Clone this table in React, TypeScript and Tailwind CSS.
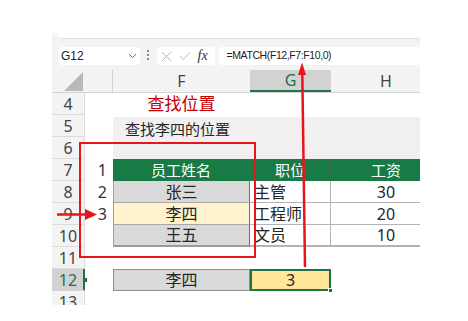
import React from "react";

const cjk = "font-['Noto_Sans','Noto_Sans_CJK_SC',sans-serif]";

function RowHead({ n, sel }: { n: number; sel?: boolean }) {
  return sel ? (
    <div className="relative w-[33px] shrink-0 flex items-center justify-center border-b border-r border-[#d4d4d4] bg-[#d2d2d2] text-[16px] text-[#217346]">
      {n}
      <div className="absolute right-[-1px] top-0 h-full w-[2px] bg-[#217346]" />
      <div className="absolute right-[-3px] top-[9px] h-[4px] w-[4px] bg-[#217346]" />
    </div>
  ) : (
    <div className="w-[33px] shrink-0 flex items-center justify-center border-b border-r border-[#dcdcdc] bg-[#f3f3f3] text-[16px] text-[#444]">
      {n}
    </div>
  );
}

export default function App() {
  return (
    <div className="w-[468px] h-[321px] bg-white pl-[52px] pt-[33px] overflow-hidden">
      <div className={`relative w-[368px] h-[272px] overflow-hidden bg-[#f3f3f3] ${cjk}`}>
        {/* ribbon remnant */}
        <div className="h-[7px] pl-[6px]">
          <div className="h-[6px] rounded-b-[4px] bg-white border-b border-[#e2e2e2]" />
        </div>

        {/* formula bar */}
        <div className="h-[30px] flex items-start pt-[7px]">
          <div className="ml-[7px] w-[81px] h-[18px] rounded-[3px] bg-white flex items-center justify-between pl-[2px] pr-[3px]">
            <span className="text-[12px] text-[#222] font-['Liberation_Sans',sans-serif]">G12</span>
            <svg width="9" height="6" viewBox="0 0 9 6">
              <path d="M1 1.2 L4.5 4.5 L8 1.2" fill="none" stroke="#666" strokeWidth="1" />
            </svg>
          </div>
          <div className="ml-[7px] mt-[3px] flex flex-col gap-[2px]">
            <div className="w-[1.5px] h-[2px] bg-[#888]" />
            <div className="w-[1.5px] h-[2px] bg-[#888]" />
            <div className="w-[1.5px] h-[2px] bg-[#888]" />
          </div>
          <div className="ml-[8px] w-[58px] h-[18px] rounded-[3px] bg-white flex items-center pl-[4px] gap-[7px]">
            <svg width="11" height="11" viewBox="0 0 11 11">
              <path d="M1 1 L10 10 M10 1 L1 10" stroke="#b5b5b5" strokeWidth="1" />
            </svg>
            <svg width="12" height="10" viewBox="0 0 12 10">
              <path d="M1 5.5 L4.2 8.5 L11 1.5" fill="none" stroke="#b5b5b5" strokeWidth="1" />
            </svg>
            <span className="text-[14px] italic text-[#333] font-['Liberation_Serif',serif] leading-none">fx</span>
          </div>
          <div className="ml-[4px] flex-1 h-[18px] rounded-l-[3px] bg-white flex items-center pl-[8px]">
            <span className="text-[10.5px] tracking-[-0.4px] text-[#222] font-['Liberation_Sans',sans-serif]">
              =MATCH(F12,F7:F10,0)
            </span>
          </div>
        </div>

        {/* column headers */}
        <div className="flex h-[23px] border-b border-[#d4d4d4] text-[16px] text-[#444]">
          <div className="w-[33px] shrink-0 flex items-end justify-end pr-[2px] pb-[1px]">
            <svg width="19" height="19" viewBox="0 0 19 19">
              <path d="M19 0 L19 19 L0 19 Z" fill="#b9b9b9" />
            </svg>
          </div>
          <div className="w-[28px] shrink-0 border-r border-[#d4d4d4]" />
          <div className="w-[137px] shrink-0 flex items-center justify-center">F</div>
          <div className="w-[81px] shrink-0 flex items-center justify-center bg-[#d2d2d2] border-b-2 border-[#217346] text-[#217346]">
            G
          </div>
          <div className="w-[110px] shrink-0 flex items-center justify-center">H</div>
        </div>

        {/* row 4 */}
        <div className="flex h-[22px]">
          <RowHead n={4} />
          <div className="flex flex-1 bg-white">
            <div className="w-[28px] shrink-0" />
            <div className="w-[137px] shrink-0 flex items-center justify-center text-[17px] text-[#c00000]">
              查找位置
            </div>
          </div>
        </div>

        {/* row 5 */}
        <div className="flex h-[22px]">
          <RowHead n={5} />
          <div className="flex flex-1 bg-white">
            <div className="w-[28px] shrink-0" />
            <div className="flex-1 flex flex-col">
              <div className="h-[6px]" />
              <div className="relative z-10 flex-1 bg-[#f0f0f0] pl-[12px] text-[15px] leading-[16px] text-[#262626]">
                <div className="pt-[4px] whitespace-nowrap">查找李四的位置</div>
              </div>
            </div>
          </div>
        </div>

        {/* row 6 */}
        <div className="flex h-[22px]">
          <RowHead n={6} />
          <div className="flex flex-1 bg-white">
            <div className="w-[28px] shrink-0" />
            <div className="flex-1 bg-[#f0f0f0]" />
          </div>
        </div>

        {/* row 7 */}
        <div className="flex h-[22px]">
          <RowHead n={7} />
          <div className="flex flex-1 bg-white text-[15px] text-white">
            <div className="w-[28px] shrink-0 flex items-center justify-end pr-[6px] text-[16px] text-[#333]">1</div>
            <div className="w-[137px] shrink-0 flex items-center justify-center bg-[#187a45] border-r border-[#3d6a4e]">
              员工姓名
            </div>
            <div className="w-[81px] shrink-0 flex items-center justify-center bg-[#187a45] border-r border-[#3d6a4e]">
              职位
            </div>
            <div className="w-[110px] shrink-0 flex items-center justify-center bg-[#187a45]">工资</div>
          </div>
        </div>

        {/* row 8 */}
        <div className="flex h-[22px]">
          <RowHead n={8} />
          <div className="flex flex-1 bg-white text-[16px] text-[#262626]">
            <div className="w-[28px] shrink-0 flex items-center justify-end pr-[6px] text-[#333]">2</div>
            <div className="w-[137px] shrink-0 flex items-center justify-center bg-[#d9d9d9] border-l border-b border-r border-l-[#a0a0a0] border-b-[#a8a8a8] border-r-[#707070]">
              张三
            </div>
            <div className="w-[81px] shrink-0 flex items-center pl-[4px] border-b border-r border-[#b4b4b4]">主管</div>
            <div className="w-[110px] shrink-0 flex items-center justify-center border-b border-[#b4b4b4]">30</div>
          </div>
        </div>

        {/* row 9 */}
        <div className="flex h-[22px]">
          <RowHead n={9} />
          <div className="flex flex-1 bg-white text-[16px] text-[#262626]">
            <div className="w-[28px] shrink-0 flex items-center justify-end pr-[6px] text-[#333]">3</div>
            <div className="w-[137px] shrink-0 flex items-center justify-center bg-[#fff2cc] border-l border-b border-r border-l-[#a0a0a0] border-b-[#a8a8a8] border-r-[#707070]">
              李四
            </div>
            <div className="w-[81px] shrink-0 flex items-center pl-[4px] border-b border-r border-[#b4b4b4]">工程师</div>
            <div className="w-[110px] shrink-0 flex items-center justify-center border-b border-[#b4b4b4]">20</div>
          </div>
        </div>

        {/* row 10 */}
        <div className="flex h-[22px]">
          <RowHead n={10} />
          <div className="flex flex-1 bg-white text-[16px] text-[#262626]">
            <div className="w-[28px] shrink-0" />
            <div className="w-[137px] shrink-0 flex items-center justify-center bg-[#d9d9d9] border-l border-b-2 border-r border-l-[#a0a0a0] border-b-[#9a9a9a] border-r-[#707070]">
              王五
            </div>
            <div className="w-[81px] shrink-0 flex items-center pl-[4px] border-b-2 border-r border-[#b4b4b4]">文员</div>
            <div className="w-[110px] shrink-0 flex items-center justify-center border-b-2 border-[#b4b4b4]">10</div>
          </div>
        </div>

        {/* row 11 */}
        <div className="flex h-[22px]">
          <RowHead n={11} />
          <div className="flex-1 bg-white" />
        </div>

        {/* row 12 */}
        <div className="flex h-[22px]">
          <RowHead n={12} sel />
          <div className="flex flex-1 bg-white text-[16px] text-[#262626]">
            <div className="w-[28px] shrink-0" />
            <div className="w-[137px] shrink-0 flex items-center justify-center bg-[#d9d9d9] border border-[#8f8f8f]">
              李四
            </div>
            <div className="relative w-[81px] shrink-0 flex items-center justify-center bg-[#ffe699] border-2 border-[#217346]">
              3
              <div className="absolute right-[-4px] bottom-[-4px] w-[5px] h-[5px] bg-[#217346] border border-white" />
            </div>
          </div>
        </div>

        {/* row 13 */}
        <div className="flex h-[22px]">
          <RowHead n={13} />
          <div className="flex-1 bg-white" />
        </div>

        {/* red outline box */}
        <div className="absolute z-20 left-[27px] top-[109px] w-[177px] h-[116px] border-[2.5px] border-[#e8141c] pointer-events-none" />

        {/* arrows */}
        <svg className="absolute z-20 left-0 top-0 pointer-events-none" width="368" height="272" viewBox="0 0 368 272">
          <path d="M5 181.5 L36 181.5" stroke="#e8141c" strokeWidth="2.5" />
          <path d="M33 176 L45 181.5 L33 187 Z" fill="#e8141c" />
          <path d="M250.3 40 L253 234" stroke="#e8141c" strokeWidth="2.5" />
          <path d="M246 42 L250 29.5 L254 42 Z" fill="#e8141c" />
        </svg>
      </div>
    </div>
  );
}
